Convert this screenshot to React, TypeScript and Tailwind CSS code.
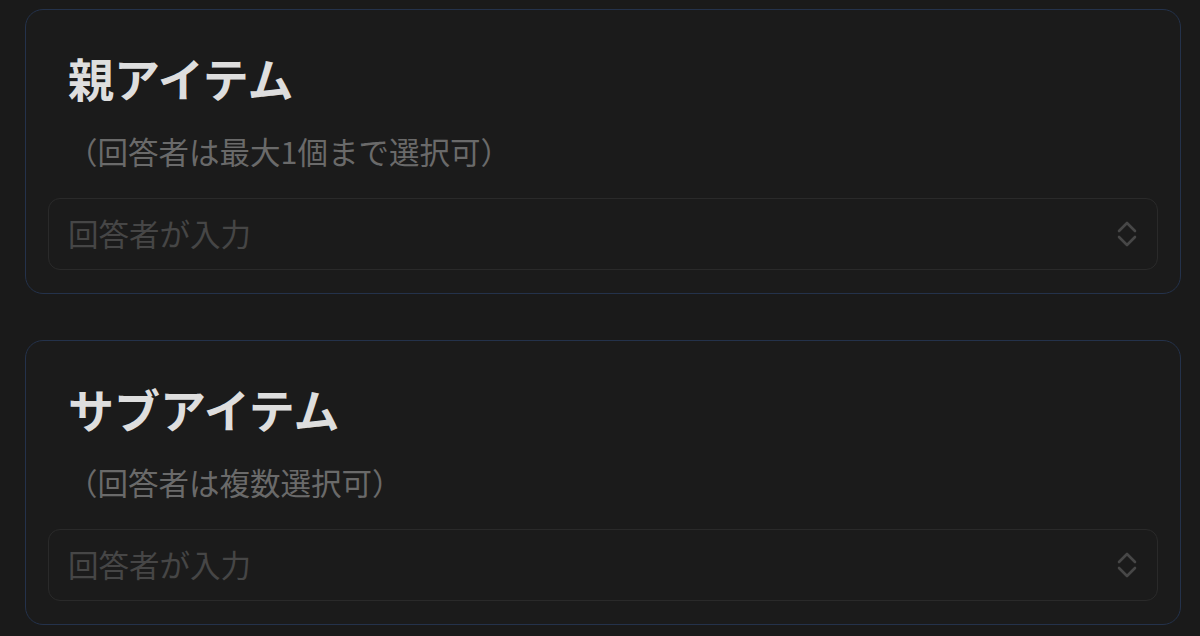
import React from "react";

const font = { fontFamily: '"Noto Sans CJK JP", "Noto Sans", sans-serif' };

function Chevrons() {
  return (
    <svg width="22" height="28" viewBox="0 0 22 28" fill="none" stroke="#474747" strokeWidth="2.6" strokeLinecap="round" strokeLinejoin="round">
      <path d="M3 11 L11 3 L19 11" />
      <path d="M3 17 L11 25 L19 17" />
    </svg>
  );
}

function Card({ title, sub }: { title: string; sub: string }) {
  return (
    <div className="rounded-[18px] border border-[#24324b] bg-[#1b1b1b] px-[22px] pt-[41px] pb-[23px]">
      <div className="pl-[20px] text-[46px] leading-[52px] font-bold text-[#dedede]">{title}</div>
      <div className="mt-[28px] pl-[19px] text-[30.5px] leading-[40px] text-[#6a6a6a]">{sub}</div>
      <div className="mt-[27px] flex h-[72px] items-center justify-between rounded-[12px] border border-[#2a2a2a] pl-[19px] pr-[19px]">
        <span className="text-[30.5px] text-[#464646]">回答者が入力</span>
        <Chevrons />
      </div>
    </div>
  );
}

export default function App() {
  return (
    <div className="min-h-[636px] w-[1200px] bg-[#1a1a1a] pl-[25px] pr-[19px] pt-[9px]" style={font}>
      <div className="flex flex-col gap-[46px]">
        <Card title="親アイテム" sub="（回答者は最大1個まで選択可）" />
        <Card title="サブアイテム" sub="（回答者は複数選択可）" />
      </div>
    </div>
  );
}
